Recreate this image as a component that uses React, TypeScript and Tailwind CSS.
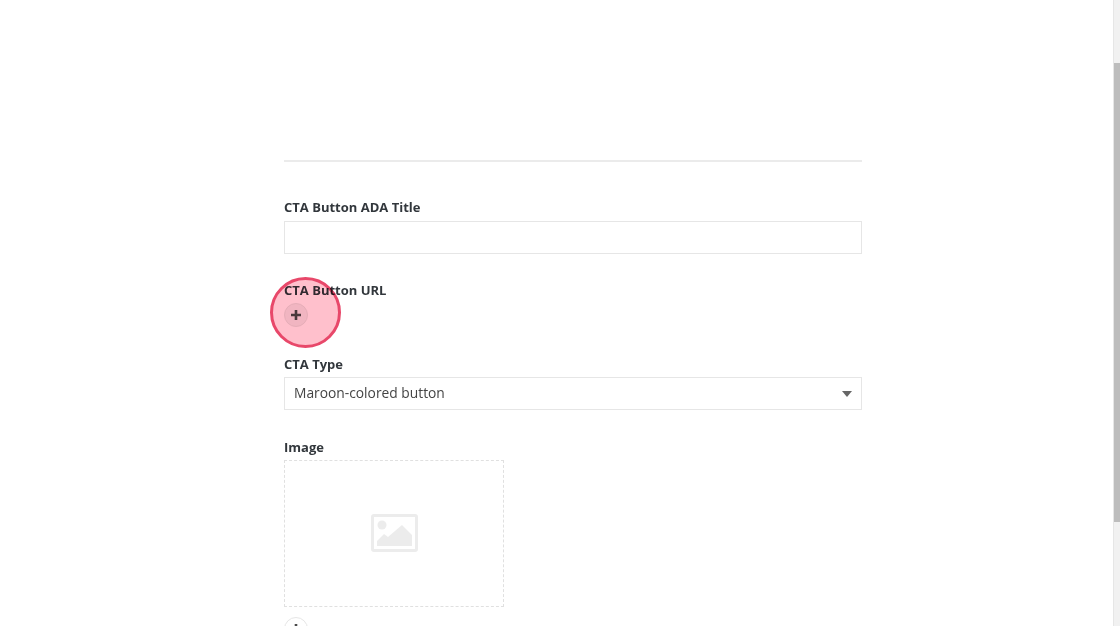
import React from "react";

function PlusButton({ hovered }: { hovered?: boolean }) {
  return (
    <button
      className={
        hovered
          ? "flex h-6 w-6 items-center justify-center rounded-full border border-[#e6e6e6] bg-[#f1f1f1]"
          : "flex h-6 w-6 items-center justify-center rounded-full border border-[#e6e6e6] bg-white"
      }
    >
      <svg width="10" height="10" viewBox="0 0 10 10" aria-hidden="true">
        <path d="M5 0v10M0 5h10" stroke="#4a4a4a" strokeWidth="2.6" fill="none" />
      </svg>
    </button>
  );
}

export default function App() {
  return (
    <div className="flex h-[626px] w-[1120px] overflow-hidden bg-white font-['Open_Sans',sans-serif] text-[13px] text-[#32373c]">
      <main className="relative flex-1 overflow-hidden pl-[284px]">
        <div className="flex w-[578px] flex-col pt-[160px]">
          <div className="h-[2px] bg-[#ebebeb]" />

          <label className="mt-[36px] h-[19px] font-bold leading-[19px]">CTA Button ADA Title</label>
          <div className="mt-[4px] h-[33px] border border-[#e6e6e6] bg-white" />

          <label className="mt-[27px] h-[19px] font-bold leading-[19px]">CTA Button URL</label>
          <div className="mt-[3px] h-6">
            <PlusButton hovered />
          </div>

          <label className="mt-[28px] h-[19px] font-bold leading-[19px]">CTA Type</label>
          <div className="mt-[3px] flex h-[33px] items-center justify-between border border-[#e6e6e6] bg-white pl-[9px] pr-[9px]">
            <span className="text-[13.8px] text-[#444]">Maroon-colored button</span>
            <span className="h-0 w-0 border-x-[5.5px] border-t-[6px] border-x-transparent border-t-[#666]" />
          </div>

          <label className="mt-[28px] h-[19px] font-bold leading-[19px]">Image</label>
          <div className="mt-[3px] flex h-[147px] w-[220px] items-center justify-center border border-dashed border-[#e0e0e0] pb-[2px]">
            <svg width="47" height="38" viewBox="0 0 47 38" aria-hidden="true">
              <rect x="1.5" y="1.5" width="44" height="35" rx="1.5" fill="none" stroke="#ececec" strokeWidth="3" />
              <circle cx="11" cy="11" r="4.5" fill="#ececec" />
              <path d="M6 32v-5l7-7 4 3 14-12 10 10v11z" fill="#ececec" />
            </svg>
          </div>

          <div className="mt-[10px]">
            <PlusButton />
          </div>
        </div>

        <div className="absolute left-[270px] top-[277px] h-[71px] w-[71px] rounded-full border-[3px] border-[#e8486a] bg-[#ffc0cc] mix-blend-multiply" />
      </main>

      <div className="flex w-[7px] flex-col border-l border-[#e6e6e6] bg-[#f1f1f1] pt-[63px]">
        <div className="h-[459px] bg-[#bdbdbd]" />
      </div>
    </div>
  );
}
